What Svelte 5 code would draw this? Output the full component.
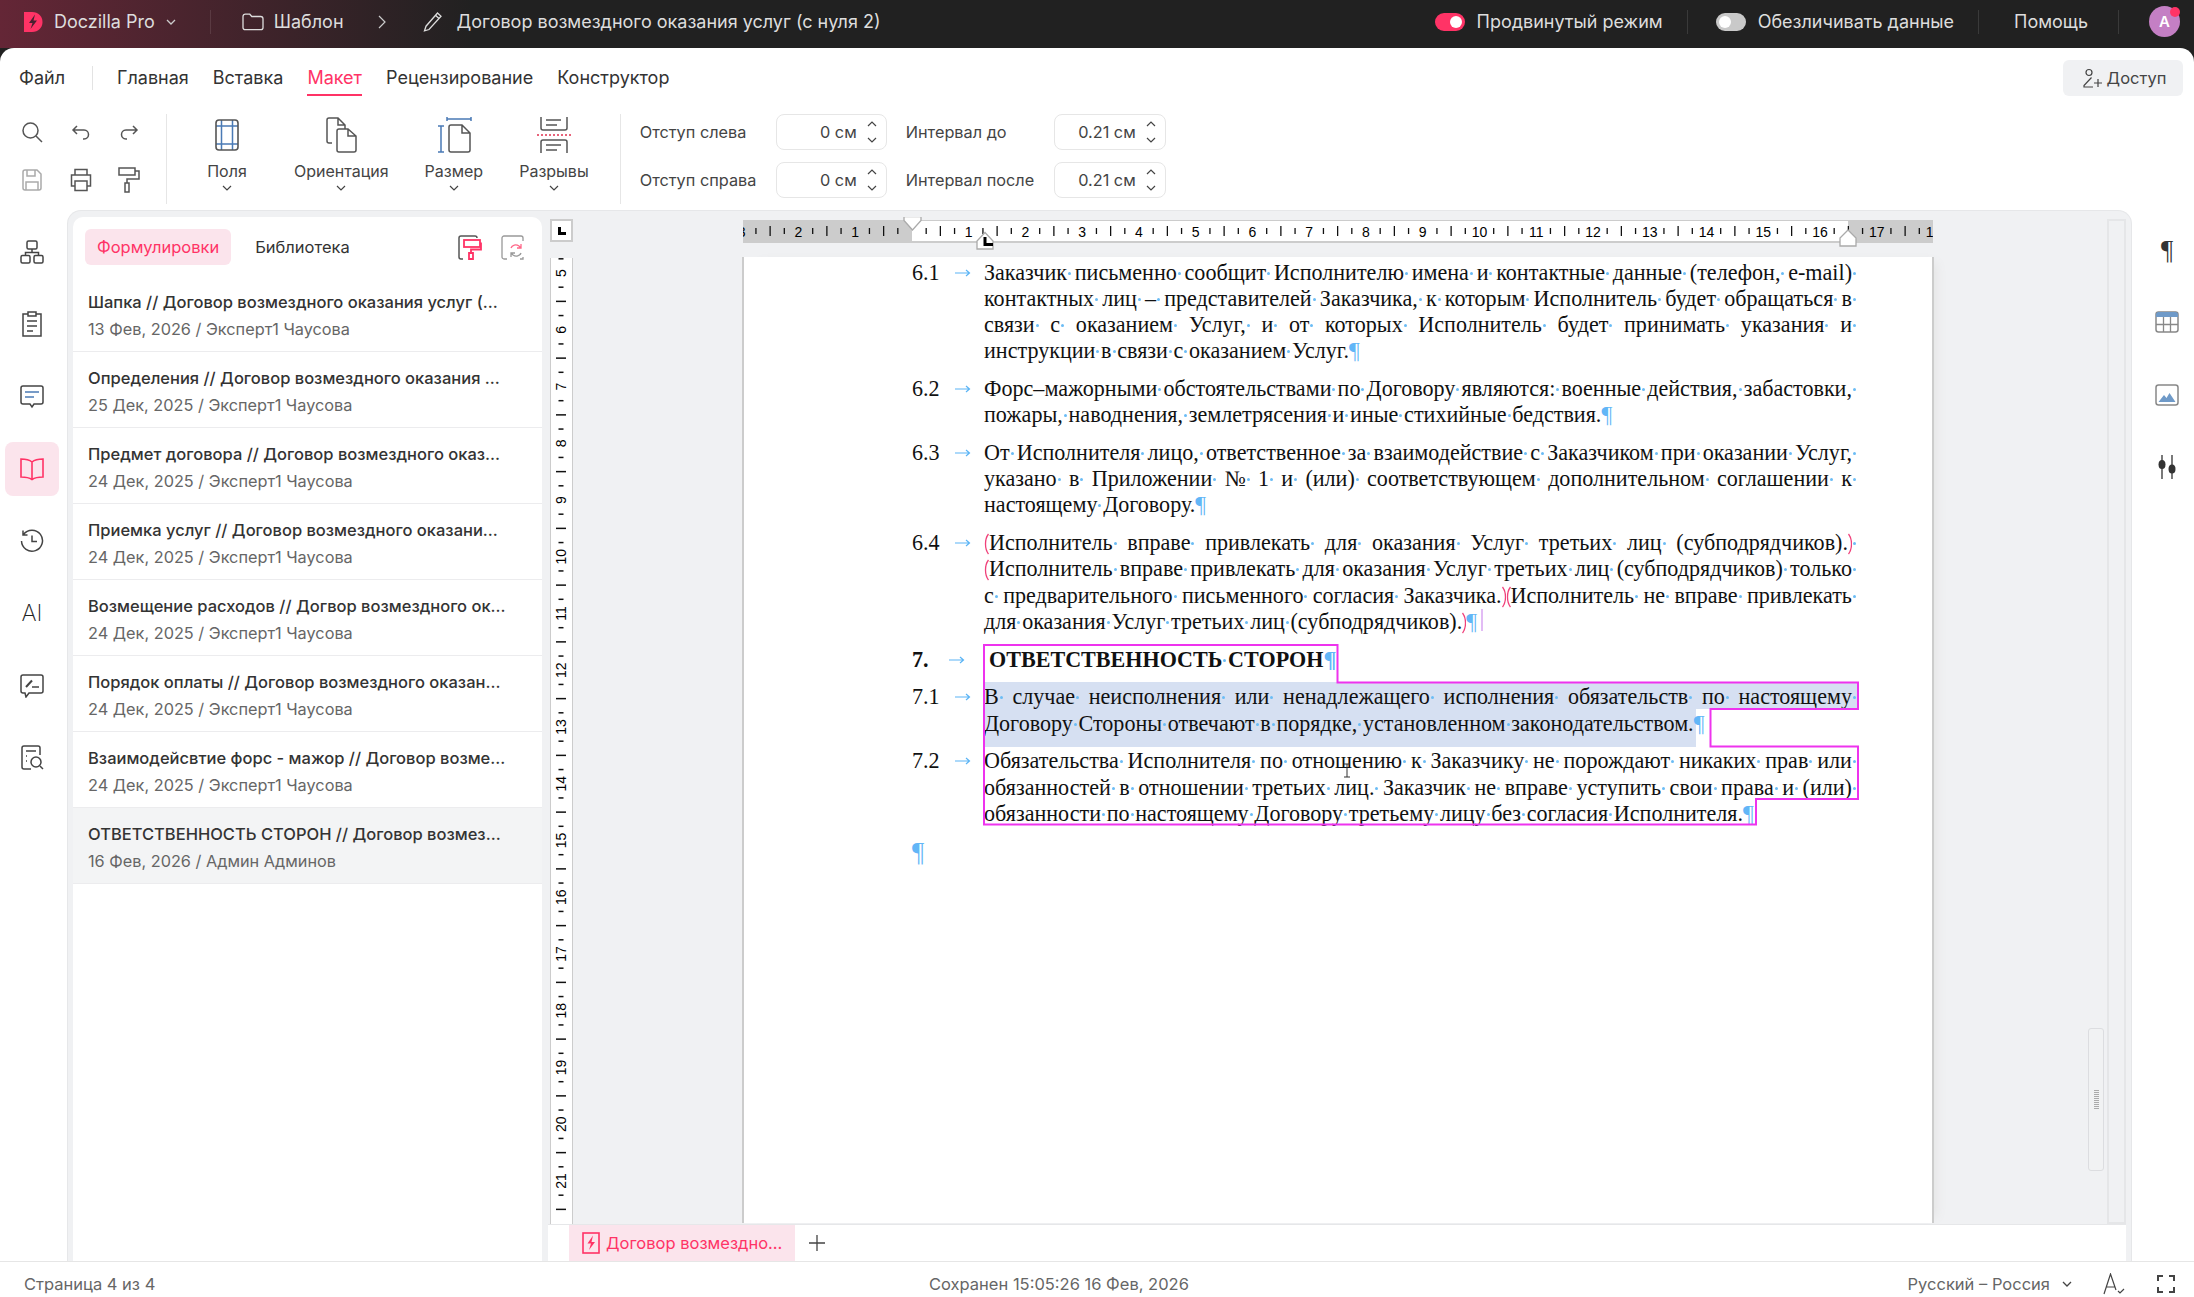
<script>
  const tabs = ["Главная", "Вставка", "Макет", "Рецензирование", "Конструктор"];

  const items = [
    { title: "Шапка // Договор возмездного оказания услуг (...", meta: "13 Фев, 2026 / Эксперт1 Чаусова" },
    { title: "Определения // Договор возмездного оказания ...", meta: "25 Дек, 2025 / Эксперт1 Чаусова" },
    { title: "Предмет договора // Договор возмездного оказ...", meta: "24 Дек, 2025 / Эксперт1 Чаусова" },
    { title: "Приемка услуг // Договор возмездного оказани...", meta: "24 Дек, 2025 / Эксперт1 Чаусова" },
    { title: "Возмещение расходов // Догвор возмездного ок...", meta: "24 Дек, 2025 / Эксперт1 Чаусова" },
    { title: "Порядок оплаты // Договор возмездного оказан...", meta: "24 Дек, 2025 / Эксперт1 Чаусова" },
    { title: "Взаимодейсвтие форс - мажор // Договор возме...", meta: "24 Дек, 2025 / Эксперт1 Чаусова" },
    { title: "ОТВЕТСТВЕННОСТЬ СТОРОН // Договор возмез...", meta: "16 Фев, 2026 / Админ Админов", active: true }
  ];

  // the last line of each paragraph is the one that is not justified
  const paragraphs = [
    { num: "6.1", lines: [
      "Заказчик письменно сообщит Исполнителю имена и контактные данные (телефон, e-mail)",
      "контактных лиц – представителей Заказчика, к которым Исполнитель будет обращаться в",
      "связи с оказанием Услуг, и от которых Исполнитель будет принимать указания и",
      "инструкции в связи с оказанием Услуг."
    ] },
    { num: "6.2", lines: [
      "Форс–мажорными обстоятельствами по Договору являются: военные действия, забастовки,",
      "пожары, наводнения, землетрясения и иные стихийные бедствия."
    ] },
    { num: "6.3", lines: [
      "От Исполнителя лицо, ответственное за взаимодействие с Заказчиком при оказании Услуг,",
      "указано в Приложении № 1 и (или) соответствующем дополнительном соглашении к",
      "настоящему Договору."
    ] },
    { num: "6.4", lines: [
      "[Исполнитель вправе привлекать для оказания Услуг третьих лиц (субподрядчиков).]",
      "[Исполнитель вправе привлекать для оказания Услуг третьих лиц (субподрядчиков) только",
      "с предварительного письменного согласия Заказчика.][Исполнитель не вправе привлекать",
      "для оказания Услуг третьих лиц (субподрядчиков).]"
    ] },
    { num: "7.", head: true, lines: ["ОТВЕТСТВЕННОСТЬ СТОРОН"] },
    { num: "7.1", lines: [
      "В случае неисполнения или ненадлежащего исполнения обязательств по настоящему",
      "Договору Стороны отвечают в порядке, установленном законодательством."
    ] },
    { num: "7.2", lines: [
      "Обязательства Исполнителя по отношению к Заказчику не порождают никаких прав или",
      "обязанностей в отношении третьих лиц. Заказчик не вправе уступить свои права и (или)",
      "обязанности по настоящему Договору третьему лицу без согласия Исполнителя."
    ] }
  ];

  const cm = 56.75;
  const hTicks = [];
  for (let i = -3; i <= 18; i++) {
    const x = 169 + i * cm;
    hTicks.push({ x, n: Math.abs(i) });
    hTicks.push({ x: x + cm / 4, h: 6 });
    hTicks.push({ x: x + cm / 2, h: 10 });
    hTicks.push({ x: x + (cm * 3) / 4, h: 6 });
  }
  const vTicks = [];
  for (let i = 5; i <= 21; i++) {
    const y = 15 + (i - 5) * cm;
    vTicks.push({ y, n: i });
    vTicks.push({ y: y + cm / 4, w: 5 });
    vTicks.push({ y: y + cm / 2, w: 10 });
    vTicks.push({ y: y - cm / 4, w: 5 });
  }

  const parts = (word) => word.split(/([\[\]])/).filter(Boolean);
</script>

<div class="app">
  <header class="topbar">
    <svg class="logo" width="19" height="22" viewBox="0 0 19 22">
      <path d="M0 1h8c6.500 0 10.500 4.500 10.500 10S14.500 21 8 21H0z" fill="#ff3366" />
      <path d="M11 3.500 5 12h3.500L6.500 18 13 9.500H9.500z" fill="#4a2030" />
    </svg>
    <span class="product">Doczilla Pro</span>
    <svg class="chev" width="10" height="6" viewBox="0 0 10 6"><path d="M1 1l4 4 4-4" fill="none" stroke="#ccc" stroke-width="1.300" /></svg>
    <i class="tsep first"></i>
    <svg class="folder" width="22" height="18" viewBox="0 0 22 18"><path d="M1 3.500C1 2.100 2 1.200 3.300 1.200h4.500l2 2.300h8.900c1.300 0 2.300 1 2.300 2.300v9c0 1.300-1 1.900-2.300 1.900H3.300C2 16.700 1 16 1 14.800z" fill="none" stroke="#ddd" stroke-width="1.300" /></svg>
    <span class="crumb">Шаблон</span>
    <svg class="crumb-arrow" width="8" height="14" viewBox="0 0 8 14"><path d="M1 1l6 6-6 6" fill="none" stroke="#ccc" stroke-width="1.200" /></svg>
    <svg class="pencil" width="20" height="21" viewBox="0 0 20 21"><path d="M14.500 2l3.500 3.200L6 18.500l-4.500 1.300L3 15.200zM12.500 4.300l3.500 3.200" fill="none" stroke="#ddd" stroke-width="1.300" /></svg>
    <span class="doc-title">Договор возмездного оказания услуг (с нуля 2)</span>

    <div class="top-right">
      <span class="toggle on"><i></i></span>
      <span class="tlabel">Продвинутый режим</span>
      <i class="tsep"></i>
      <span class="toggle"><i></i></span>
      <span class="tlabel">Обезличивать данные</span>
      <i class="tsep"></i>
      <span class="help">Помощь</span>
      <i class="tsep"></i>
      <span class="avatar">А<i></i></span>
    </div>
  </header>

  <div class="main">
    <nav class="tabs">
      <span class="file">Файл</span>
      <i class="tabs-sep"></i>
      {#each tabs as t}
        <span class="tab" class:sel={t === "Макет"}>{t}</span>
      {/each}
      <button class="share">
        <svg width="24" height="24" viewBox="0 0 24 24" fill="none" stroke="#444" stroke-width="1.200">
          <circle cx="9" cy="6.500" r="3" />
          <path d="M11.500 11.500 4 19.500v1.500h9M18 13v8M14 17h8" />
        </svg>
        Доступ
      </button>
    </nav>

    <section class="ribbon">
      <div class="tools">
        <svg width="24" height="24" viewBox="0 0 24 24" fill="none" stroke="#555" stroke-width="1.500"><circle cx="10.500" cy="10.500" r="7.500" /><path d="M16 16l6 6" /></svg>
        <svg width="20" height="18" viewBox="0 0 20 18" fill="none" stroke="#555" stroke-width="1.500"><path d="M6 3 2 7l4 4M2 7h11c6 0 6 9 0 9h-1" /></svg>
        <svg width="20" height="18" viewBox="0 0 20 18" fill="none" stroke="#555" stroke-width="1.500"><path d="m14 3 4 4-4 4M18 7H7c-6 0-6 9 0 9h1" /></svg>
        <svg width="20" height="22" viewBox="0 0 20 22" fill="none" stroke="#aaa" stroke-width="1.500"><path d="M1 3c0-1 1-2 2-2h12l4 4v14c0 1-1 2-2 2H3c-1 0-2-1-2-2zM5 1v6h8V1M4 21v-8h12v8" /></svg>
        <svg width="22" height="24" viewBox="0 0 22 24" fill="none" stroke="#555" stroke-width="1.500"><path d="M5 7V1.500h12V7M5 18H1.500V7h19v11H17M5 13h12v9.500H5z" /></svg>
        <svg width="22" height="26" viewBox="0 0 22 26" fill="none" stroke="#555" stroke-width="1.500"><path d="M1 1h16v7H1zM17 4h4v8H9v4M7 16h4v9H7z" /></svg>
      </div>
      <i class="rsep"></i>
      <div class="rbtn fields">
        <svg width="36" height="36" viewBox="0 0 36 36" fill="none">
          <path d="M7 9h22M7 27h22M12.500 3v30M23.500 3v30" stroke="#4a7ab5" stroke-width="1.500" />
          <rect x="7" y="3" width="22" height="30" rx="3" stroke="#555" stroke-width="1.600" />
        </svg>
        <span>Поля</span>
        <svg class="rchev" width="10" height="6" viewBox="0 0 10 6"><path d="M1 1l4 4 4-4" fill="none" stroke="#444" stroke-width="1.200" /></svg>
      </div>
      <div class="rbtn">
        <svg width="36" height="36" viewBox="0 0 36 36" fill="none" stroke="#555" stroke-width="1.500">
          <path d="M9 26H6c-1 0-2-1-2-2V3c0-1 1-2 2-2h9l7 7v5M15 1v7h7" />
          <path d="M14 14c0-1 1-2 2-2h9l8 7v14c0 1-1 2-2 2H16c-1 0-2-1-2-2zM25 12v7h8" fill="#fff" />
        </svg>
        <span>Ориентация</span>
        <svg class="rchev" width="10" height="6" viewBox="0 0 10 6"><path d="M1 1l4 4 4-4" fill="none" stroke="#444" stroke-width="1.200" /></svg>
      </div>
      <div class="rbtn">
        <svg width="36" height="36" viewBox="0 0 36 36" fill="none">
          <path d="M11 2h24M11 0v4M35 0v4M5 9v26M2 9h6M2 35h6" stroke="#4a7ab5" stroke-width="1.500" />
          <path d="M13 10c0-1 1-2 2-2h11l8 8v17c0 1-1 2-2 2H15c-1 0-2-1-2-2zM26 8v8h8" stroke="#555" stroke-width="1.500" />
        </svg>
        <span>Размер</span>
        <svg class="rchev" width="10" height="6" viewBox="0 0 10 6"><path d="M1 1l4 4 4-4" fill="none" stroke="#444" stroke-width="1.200" /></svg>
      </div>
      <div class="rbtn">
        <svg width="36" height="36" viewBox="0 0 36 36" fill="none">
          <path d="M5 0v11c0 1 1 2 2 2h22c1 0 2-1 2-2V0M10 3h15M10 8h11" stroke="#555" stroke-width="1.500" />
          <path d="M1 18h34" stroke="#e0304f" stroke-width="1.500" stroke-dasharray="2 2" />
          <path d="M5 36V25c0-1 1-2 2-2h22c1 0 2 1 2 2v11M10 28h15M10 33h11" stroke="#555" stroke-width="1.500" />
        </svg>
        <span>Разрывы</span>
        <svg class="rchev" width="10" height="6" viewBox="0 0 10 6"><path d="M1 1l4 4 4-4" fill="none" stroke="#444" stroke-width="1.200" /></svg>
      </div>
      <i class="rsep"></i>
      <div class="params">
        <span>Отступ слева</span>
        <div class="num">0 см<svg width="10" height="24" viewBox="0 0 10 24"><path d="M1 6l4-4 4 4M1 18l4 4 4-4" fill="none" stroke="#444" stroke-width="1.200" /></svg></div>
        <span>Интервал до</span>
        <div class="num">0.21 см<svg width="10" height="24" viewBox="0 0 10 24"><path d="M1 6l4-4 4 4M1 18l4 4 4-4" fill="none" stroke="#444" stroke-width="1.200" /></svg></div>
        <span>Отступ справа</span>
        <div class="num">0 см<svg width="10" height="24" viewBox="0 0 10 24"><path d="M1 6l4-4 4 4M1 18l4 4 4-4" fill="none" stroke="#444" stroke-width="1.200" /></svg></div>
        <span>Интервал после</span>
        <div class="num">0.21 см<svg width="10" height="24" viewBox="0 0 10 24"><path d="M1 6l4-4 4 4M1 18l4 4 4-4" fill="none" stroke="#444" stroke-width="1.200" /></svg></div>
      </div>
    </section>

    <div class="middle">
      <aside class="rail">
        <span class="rail-btn">
          <svg width="24" height="24" viewBox="0 0 24 24" fill="none" stroke="#444" stroke-width="1.500"><rect x="7" y="1" width="10" height="8" rx="1.500" /><rect x="1" y="15.500" width="9" height="7.500" rx="1.500" /><rect x="14" y="15.500" width="9" height="7.500" rx="1.500" /><path d="M12 9v3.500M5.500 15.500v-3h13v3" /></svg>
        </span>
        <span class="rail-btn">
          <svg width="24" height="26" viewBox="0 0 24 26" fill="none" stroke="#444" stroke-width="1.500"><path d="M8 3H3v22h18V3h-5M8 1h8v4H8zM7 10h10M7 15h10M7 20h6" /></svg>
        </span>
        <span class="rail-btn">
          <svg width="24" height="24" viewBox="0 0 24 24" fill="none"><path d="M3 1h18c1 0 2 1 2 2v14c0 1-1 2-2 2h-7l-2 3-2-3H3c-1 0-2-1-2-2V3c0-1 1-2 2-2z" stroke="#444" stroke-width="1.500" /><path d="M5 7h14" stroke="#4a7ab5" stroke-width="1.500" /><path d="M5 12h9" stroke="#4a7ab5" stroke-width="1.500" /></svg>
        </span>
        <span class="rail-btn on">
          <svg width="24" height="24" viewBox="0 0 24 24" fill="none" stroke="#ff3366" stroke-width="1.600"><path d="M12 5C9 2.500 5 2 1 2v18c4 0 8 .5 11 2.500C15 20.500 19 20 23 20V2c-4 0-8 .5-11 3zM12 5v18" /></svg>
        </span>
        <span class="rail-btn">
          <svg width="24" height="24" viewBox="0 0 24 24" fill="none" stroke="#444" stroke-width="1.500"><path d="M3.500 5.500A10.500 10.500 0 1 1 1.500 12M3 1.500v4.500h4.500M12 6.500V12.500H17" /></svg>
        </span>
        <span class="rail-btn ai">AI</span>
        <span class="rail-btn">
          <svg width="24" height="24" viewBox="0 0 24 24" fill="none" stroke="#444" stroke-width="1.500"><path d="M3 1h18c1 0 2 1 2 2v14c0 1-1 2-2 2H9l-3 4-1-4H3c-1 0-2-1-2-2V3c0-1 1-2 2-2z" /><path d="M6 13 12 6.500" stroke-width="2" /><path d="M12 13h7" /></svg>
        </span>
        <span class="rail-btn">
          <svg width="24" height="26" viewBox="0 0 24 26" fill="none" stroke="#444" stroke-width="1.500"><path d="M11 24H4c-1 0-2-1-2-2V3c0-1 1-2 2-2h14c1 0 2 1 2 2v7M6 6h10M6 11h1M6 16h1" /><circle cx="16" cy="17" r="5" /><path d="m20 21 3 3" /></svg>
        </span>
      </aside>

      <div class="work">
        <div class="panel">
          <div class="panel-head">
            <span class="pill">Формулировки</span>
            <span class="lib">Библиотека</span>
            <svg class="pi1" width="24" height="25" viewBox="0 0 24 25" fill="none"><path d="M5 24H3c-1 0-2-1-2-2V3c0-1 1-2 2-2h14c1 0 2 1 2 2" stroke="#555" stroke-width="1.500" /><rect x="6" y="5" width="16" height="7" stroke="#ff3366" stroke-width="1.800" /><path d="M22 8.500h1v6h-10V18M11 18h4v6h-4z" stroke="#ff3366" stroke-width="1.800" /></svg>
            <svg class="pi2" width="24" height="25" viewBox="0 0 24 25" fill="none"><path d="M6 24H3c-1 0-2-1-2-2V3c0-1 1-2 2-2h17c1 0 2 1 2 2v3M22 22v2h-3" stroke="#999" stroke-width="1.300" /><path d="M10 13c1-3 5-4 8-2l2 2M20 9v4h-4" stroke="#ff6688" stroke-width="1.300" /><path d="M20 18c-1 3-5 4-8 2l-2-2M10 22v-4h4" stroke="#999" stroke-width="1.300" /></svg>
          </div>
          <ul class="list">
            {#each items as it}
              <li class:active={it.active}>
                <div class="it-title">{it.title}</div>
                <div class="it-meta">{it.meta}</div>
              </li>
            {/each}
          </ul>
        </div>

        <div class="editor">
          <div class="editor-body">
            <div class="vcol">
              <div class="corner"><i></i></div>
              <svg class="vruler" width="23" height="966" viewBox="0 0 23 966">
                {#each vTicks as t}
                  {#if t.n}
                    <text x="16" y={t.y} transform="rotate(-90 16 {t.y})" text-anchor="middle" font-size="14" font-family="Liberation Sans">{t.n}</text>
                  {:else}
                    <path d="M{11 - t.w / 2} {t.y}h{t.w}" stroke="#111" stroke-width="1.500" />
                  {/if}
                {/each}
              </svg>
            </div>

            <div class="doc-col">
              <svg class="hruler" width="1190" height="38" viewBox="0 0 1190 38">
                <svg width="1190" height="24">
                  <rect y="1" width="1190" height="23" fill="#ccc" />
                  <rect x="169" y="2" width="936" height="20" fill="#fff" />
                  {#each hTicks as t}
                    {#if t.n !== undefined}
                      {#if t.n !== 0}
                        <text x={t.x} y="17.500" text-anchor="middle" font-size="14" font-family="Liberation Sans">{t.n}</text>
                      {/if}
                    {:else}
                      <path d="M{t.x} {12 - t.h / 2}v{t.h}" stroke="#111" stroke-width="1.300" />
                    {/if}
                  {/each}
                </svg>
                <path d="M161 -2.500h17v4l-8.500 9.500-8.500-9.500z" fill="#fff" stroke="#aaa" stroke-width="1.300" />
                <path d="M234 30v-8l8-8.500 8 8.500v8z" fill="#fff" stroke="#aaa" stroke-width="1.300" />
                <path d="M242 18v7.500h8" fill="none" stroke="#000" stroke-width="3" />
                <path d="M1097 27v-8l8-8 8 8v8z" fill="#fff" stroke="#aaa" stroke-width="1.300" />
              </svg>

              <div class="page">
                <svg class="hl" width="1188" height="966" viewBox="744 258 1188 966">
                  <path d="M984 683H1858V710H1696V748H984z" fill="#d6e0f2" />
                </svg>

                {#each paragraphs as p}
                  <div class="para" class:head={p.head}>
                    <span class="pnum">{p.num}</span>
                    <svg class="parrow" width="16" height="8" viewBox="0 0 16 8"><path d="M0 4h14M11 1l3.500 3-3.500 3" fill="none" stroke="#5ab4f5" stroke-width="1.200" /></svg>
                    <div class="ptext">
                      {#each p.lines as line, i}
                        {@const last = i === p.lines.length - 1}
                        <div class="ln" class:just={!last}>
                          {#each line.split(" ") as w, j}
                            {@const endWord = j === line.split(" ").length - 1}
                            <span class="w" class:nodot={last && endWord}>{#each parts(w) as s}{#if s === "["}<svg class="brk" width="5" height="22" viewBox="0 0 5 22"><path d="M4.500 1C.5 6 .5 16 4.500 21" fill="none" stroke="#f0407a" stroke-width="1.300" /></svg>{:else if s === "]"}<svg class="brk" width="4" height="22" viewBox="0 0 4 22"><path d="M.5 1C4.500 6 4.500 16 .5 21" fill="none" stroke="#f0407a" stroke-width="1.300" /></svg>{:else}{s}{/if}{/each}{#if last && endWord}<span class="pil">¶</span>{/if}</span>
                          {/each}
                        </div>
                      {/each}
                    </div>
                  </div>
                {/each}
                <div class="end-mark">¶</div>

                <svg class="marks" width="1188" height="966" viewBox="744 258 1188 966" fill="none">
                  <path d="M1482 610v22" stroke="#d9a6f2" stroke-width="1.500" />
                  <path d="M984 646H1337.500V683.500H1858V710H1710.500V747.500H1858V800H1756V825.500H984z" stroke="#ee33ee" stroke-width="2" />
                  <path d="M1344 765h6M1347 765v13M1344 778h6" stroke="#333" stroke-width="1" />
                </svg>
              </div>
            </div>

            <div class="strip">
              <div class="thumb"><i></i></div>
            </div>
          </div>

          <div class="doc-tabs">
            <span class="doc-tab">
              <svg width="18" height="22" viewBox="0 0 18 22" fill="none"><rect x="1" y="1" width="16" height="20" stroke="#ff3366" stroke-width="1.600" /><path d="M11 3.500 5.500 11.500h3.500L7 18l6-8H9.500z" fill="#ff3366" /></svg>
              Договор возмездно...
            </span>
            <svg class="plus" width="18" height="18" viewBox="0 0 18 18"><path d="M9 1v16M1 9h16" stroke="#444" stroke-width="1.300" /></svg>
          </div>
        </div>
      </div>

      <aside class="rail right">
        <span class="rail-btn para-ic">¶</span>
        <span class="rail-btn">
          <svg width="24" height="22" viewBox="0 0 24 22" fill="none"><rect x="1" y="1" width="22" height="20" rx="2.500" stroke="#888" stroke-width="1.500" /><path d="M1 3.500c0-1.500 1-2.500 2.500-2.500h17c1.500 0 2.500 1 2.500 2.500V6H1z" fill="#6f9ac8" /><path d="M1 13.500h22M8.500 6v15M15.500 6v15" stroke="#888" stroke-width="1.300" /></svg>
        </span>
        <span class="rail-btn">
          <svg width="24" height="22" viewBox="0 0 24 22" fill="none"><rect x="1" y="1" width="22" height="20" rx="2.500" stroke="#888" stroke-width="1.500" /><path d="M3.500 18 9 11l2.500 3 3-5L20.500 18z" fill="#6f9ac8" /></svg>
        </span>
        <span class="rail-btn">
          <svg width="20" height="24" viewBox="0 0 20 24" fill="#333"><path d="M5 0v24M15 0v24" stroke="#333" stroke-width="1.300" /><ellipse cx="5" cy="9.500" rx="3.500" ry="4.500" /><ellipse cx="15" cy="14" rx="3.500" ry="4.500" /></svg>
        </span>
      </aside>
    </div>

    <footer class="status">
      <span class="st-left">Страница 4 из 4</span>
      <span class="st-mid">Сохранен 15:05:26 16 Фев, 2026</span>
      <span class="st-lang">Русский – Россия</span>
      <svg class="st-chev" width="10" height="6" viewBox="0 0 10 6"><path d="M1 1l4 4 4-4" fill="none" stroke="#444" stroke-width="1.300" /></svg>
      <svg class="st-spell" width="22" height="22" viewBox="0 0 22 22" fill="none" stroke="#444" stroke-width="1.200"><path d="M1 21 7.500 1 13 17M3.500 14h8M15 18l2 2 4-4" /></svg>
      <svg class="st-full" width="18" height="18" viewBox="0 0 18 18" fill="none" stroke="#444" stroke-width="2"><path d="M1 6V1h5M12 1h5v5M17 12v5h-5M6 17H1v-5" /></svg>
    </footer>
  </div>
</div>

<style>
  :global(body) {
    margin: 0;
    background: #fff;
  }

  .app {
    width: 2194px;
    height: 1297px;
    display: flex;
    flex-direction: column;
    overflow: hidden;
    background: #212121;
    font-family: Inter, "Noto Sans", sans-serif;
    color: #333;
  }

  i {
    font-style: normal;
  }

  /* top bar */
  .topbar {
    height: 48px;
    flex: none;
    box-sizing: border-box;
    padding: 0 0 5px 24px;
    display: flex;
    align-items: center;
    background: linear-gradient(90deg, #642636 0, #212121 473px);
    color: #ddd;
    font-size: 18px;
  }
  .product {
    margin-left: 11px;
  }
  .chev {
    margin-left: 11px;
  }
  .tsep {
    width: 1px;
    height: 24px;
    background: #3a3a3a;
  }
  .tsep.first {
    margin-left: 34px;
    background: #5a3a42;
  }
  .folder {
    margin-left: 31px;
  }
  .crumb {
    margin-left: 10px;
  }
  .crumb-arrow {
    margin-left: 34px;
  }
  .pencil {
    margin-left: 37px;
  }
  .doc-title {
    margin-left: 14px;
    white-space: nowrap;
  }
  .top-right {
    margin-left: auto;
    display: flex;
    align-items: center;
    padding-right: 14px;
  }
  .toggle {
    width: 30px;
    height: 18px;
    border-radius: 9px;
    background: #c9c9c9;
    display: flex;
    align-items: center;
    padding: 0 3px;
    box-sizing: border-box;
  }
  .toggle i {
    width: 12px;
    height: 12px;
    border-radius: 50%;
    background: #fff;
  }
  .toggle.on {
    background: #ff3366;
    justify-content: flex-end;
  }
  .tlabel {
    margin-left: 12px;
    margin-right: 24px;
    white-space: nowrap;
  }
  .tsep + .toggle {
    margin-left: 28px;
  }
  .help {
    margin: 0 30px 0 35px;
  }
  .avatar {
    position: relative;
    width: 31px;
    height: 31px;
    margin-left: 30px;
    border-radius: 50%;
    background: #c47fc4;
    color: #fff;
    font-size: 15px;
    font-weight: 600;
    display: flex;
    align-items: center;
    justify-content: center;
  }
  .avatar i {
    position: absolute;
    right: 0;
    top: 1px;
    width: 10px;
    height: 10px;
    border-radius: 50%;
    background: #ff3366;
  }

  .main {
    flex: 1;
    display: flex;
    flex-direction: column;
    background: #fff;
    border-radius: 14px 14px 0 0;
    min-height: 0;
  }

  /* menu tabs */
  .tabs {
    height: 48px;
    flex: none;
    padding: 12px 11px 0 19px;
    display: flex;
    align-items: flex-start;
    font-size: 18px;
    color: #333;
  }
  .file {
    line-height: 36px;
  }
  .tabs-sep {
    width: 1px;
    height: 24px;
    margin: 6px 24px 0 27px;
    background: #e3e3e3;
  }
  .tab {
    height: 36px;
    line-height: 36px;
    margin-right: 24px;
    box-sizing: border-box;
  }
  .tab.sel {
    color: #ff3366;
    border-bottom: 2px solid #ff3366;
  }
  .share {
    margin-left: auto;
    height: 36px;
    width: 120px;
    display: flex;
    align-items: center;
    justify-content: center;
    gap: 3px;
    border: 0;
    border-radius: 6px;
    background: #f0f1f3;
    color: #444;
    font: 16.500px Inter, sans-serif;
  }

  /* ribbon */
  .ribbon {
    height: 102px;
    flex: none;
    box-sizing: border-box;
    padding: 6px 0 6px 8px;
    display: flex;
  }
  .tools {
    width: 146px;
    display: grid;
    grid-template-columns: repeat(3, 48.500px);
    grid-template-rows: 36px 36px;
    row-gap: 12px;
    place-items: center;
  }
  .rsep {
    width: 1px;
    background: #e6e6e6;
  }
  .tools + .rsep {
    margin: 0 11px 0 12px;
  }
  .rbtn {
    padding: 3px 18px 0;
    display: flex;
    flex-direction: column;
    align-items: center;
    font-size: 16px;
    color: #444;
  }
  .rbtn.fields {
    width: 98px;
    padding: 3px 0 0;
  }
  .rbtn span {
    line-height: 18px;
    margin-top: 9px;
  }
  .rchev {
    margin-top: 5px;
  }
  .rbtn + .rsep {
    margin-left: 13px;
  }
  .params {
    margin-left: 19px;
    display: grid;
    grid-template-columns: 136px 111px 167px 112px;
    grid-template-rows: 36px 36px;
    row-gap: 12px;
    align-items: center;
    font-size: 16.300px;
    color: #444;
  }
  .params span:nth-child(3),
  .params span:nth-child(7) {
    padding-left: 19px;
  }
  .params .num {
    height: 36px;
    box-sizing: border-box;
    border: 1px solid #e6e6e6;
    border-radius: 8px;
    display: flex;
    align-items: center;
    justify-content: flex-end;
    gap: 10px;
    padding-right: 9px;
  }

  /* middle */
  .middle {
    flex: 1;
    display: flex;
    min-height: 0;
  }
  .rail {
    width: 67px;
    flex: none;
    box-sizing: border-box;
    padding: 15px 0 0 5px;
    display: flex;
    flex-direction: column;
    gap: 18.300px;
  }
  .rail-btn {
    width: 54px;
    height: 54px;
    border-radius: 8px;
    display: flex;
    align-items: center;
    justify-content: center;
  }
  .rail-btn.on {
    background: #fbe4ec;
  }
  .rail-btn.ai {
    font-size: 23px;
    font-weight: 200;
    color: #222;
  }
  .rail.right {
    width: 62px;
    padding: 13px 0 0 8px;
  }
  .para-ic {
    font: 27px "Liberation Serif", serif;
    color: #333;
  }

  .work {
    flex: 1;
    min-width: 0;
    display: flex;
    background: #f0f1f3;
    border: 1px solid #e6e7e9;
    border-bottom: 0;
    border-radius: 14px 14px 0 0;
    box-sizing: border-box;
    padding: 6px 5px 0 5px;
  }

  /* left panel */
  .panel {
    width: 469px;
    flex: none;
    background: #fff;
    border-radius: 10px 10px 0 0;
    margin-right: 6px;
  }
  .panel-head {
    height: 59px;
    box-sizing: border-box;
    padding: 12px 12px 0;
    display: flex;
    align-items: flex-start;
  }
  .pill {
    height: 36px;
    line-height: 36px;
    padding: 0 12px;
    border-radius: 6px;
    background: #fbe4ec;
    color: #ff3366;
    font-size: 16.500px;
  }
  .lib {
    line-height: 36px;
    margin-left: 24px;
    font-size: 16.500px;
    color: #333;
  }
  .pi1 {
    margin: 6px 0 0 auto;
  }
  .pi2 {
    margin: 6px 5px 0 19px;
  }
  .list {
    list-style: none;
    margin: 0;
    padding: 0;
  }
  .list li {
    height: 76px;
    box-sizing: border-box;
    padding: 15px 0 0 15px;
    border-bottom: 1px solid #ececee;
  }
  .list li.active {
    background: #f3f4f5;
  }
  .it-title {
    font-size: 16.500px;
    font-weight: 450;
    line-height: 22px;
    color: #333;
    white-space: nowrap;
  }
  .it-meta {
    margin-top: 6px;
    font-size: 16.300px;
    line-height: 20px;
    color: #666;
  }

  /* editor */
  .editor {
    flex: 1;
    min-width: 0;
    display: flex;
    flex-direction: column;
  }
  .editor-body {
    flex: 1;
    min-height: 0;
    display: flex;
    overflow: hidden;
  }
  .vcol {
    width: 24px;
    flex: none;
    margin-left: 2px;
    padding-top: 2px;
  }
  .corner {
    width: 23px;
    height: 23px;
    box-sizing: border-box;
    background: #fff;
    border: 2px solid #ccc;
    display: flex;
    align-items: center;
    justify-content: center;
  }
  .corner i {
    width: 5px;
    height: 5px;
    border-left: 3px solid #000;
    border-bottom: 3px solid #000;
  }
  .vruler {
    display: block;
    margin-top: 16px;
    background: #fff;
    box-shadow: inset 1px 0 #ccc, inset -1px 0 #ccc;
  }
  .doc-col {
    flex: none;
    width: 1533px;
    padding-left: 170px;
    box-sizing: border-box;
    padding-top: 2px;
  }
  .hruler {
    display: block;
    overflow: visible;
    height: 38px;
    margin-left: -1px;
  }
  .page {
    position: relative;
    width: 1188px;
    height: 966px;
    box-sizing: border-box;
    background: #fff;
    padding: 2.500px 0 0 168px;
    box-shadow: -2px 0 0 #ccc, 2px 0 0 #ccc, 10px 0 10px -6px #e3e3e3;
    font-family: "Liberation Serif", serif;
    font-size: 22.100px;
    line-height: 26.200px;
    color: #111;
  }
  .hl,
  .marks {
    position: absolute;
    left: 0;
    top: 0;
  }
  .marks {
    pointer-events: none;
  }
  .para {
    position: relative;
    display: grid;
    grid-template-columns: 43px 29px 868px;
    margin-bottom: 11.600px;
  }
  .parrow {
    margin-top: 9px;
  }
  .ln {
    display: flex;
    gap: 5.700px;
    white-space: pre;
  }
  .ln.just {
    gap: 0;
    justify-content: space-between;
  }
  .w {
    position: relative;
  }
  .w::after {
    content: "";
    position: absolute;
    left: 100%;
    top: 12px;
    margin-left: 1px;
    width: 3px;
    height: 3px;
    border-radius: 50%;
    background: #6bbcf5;
  }
  .w.nodot::after {
    display: none;
  }
  .pil {
    color: #62b6f7;
    font-size: 24px;
    line-height: 0;
  }
  .brk {
    vertical-align: -5px;
  }
  .head {
    font-weight: bold;
  }
  .head .parrow {
    margin-left: -6px;
  }
  .head .ptext {
    padding-left: 5px;
  }
  .end-mark {
    font-size: 27px;
    color: #62b6f7;
    line-height: 26px;
    margin-top: 5px;
  }

  .strip {
    flex: none;
    width: 19px;
    height: 1005px;
    margin-top: 2px;
    box-sizing: border-box;
    border: 2px solid #e5e6e8;
    position: relative;
  }
  .thumb {
    position: absolute;
    left: -21px;
    top: 807px;
    width: 16px;
    height: 143px;
    box-sizing: border-box;
    border: 1px solid #dcdde0;
    border-radius: 3px;
    background: #f1f2f3;
    display: flex;
    align-items: center;
    justify-content: center;
  }
  .thumb i {
    width: 5px;
    height: 20px;
    background: repeating-linear-gradient(#aaa 0 1px, transparent 1px 2px);
  }

  .doc-tabs {
    height: 37px;
    flex: none;
    box-sizing: border-box;
    padding-left: 21px;
    background: #fff;
    border-top: 1px solid #e6e7e9;
    display: flex;
    align-items: stretch;
  }
  .doc-tab {
    width: 226px;
    box-sizing: border-box;
    padding-left: 13px;
    display: flex;
    align-items: center;
    gap: 6px;
    background: #fbe4ec;
    color: #ff3366;
    font-size: 16.500px;
    white-space: nowrap;
  }
  .plus {
    align-self: center;
    margin-left: 13px;
  }

  /* status bar */
  .status {
    height: 36px;
    flex: none;
    box-sizing: border-box;
    border-top: 1px solid #e6e6e6;
    padding: 8px 0 0 24px;
    display: flex;
    align-items: center;
    font-size: 16.500px;
    color: #666;
  }
  .st-left {
    width: 905px;
  }
  .st-lang {
    margin-left: auto;
  }
  .st-chev {
    margin-left: 12px;
  }
  .st-spell {
    margin-left: 31px;
  }
  .st-full {
    margin: 0 19px 0 32px;
  }
</style>
